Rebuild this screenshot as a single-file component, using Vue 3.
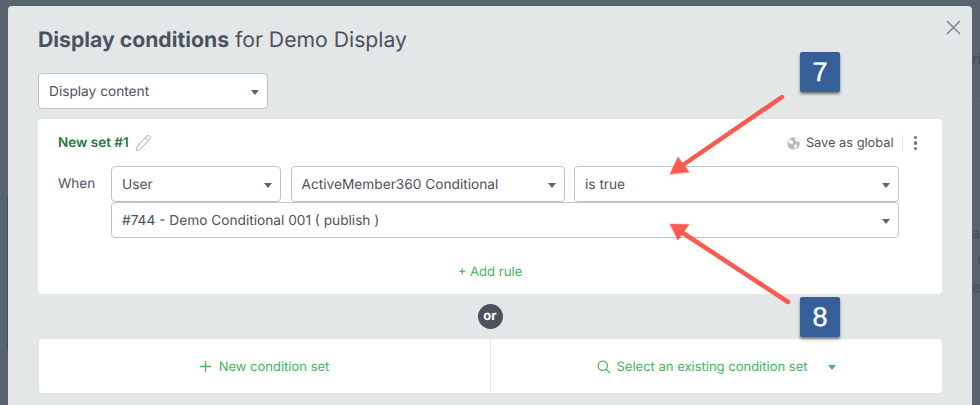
<script setup>
const firstRow = [
  { label: 'User', cls: 'w-user' },
  { label: 'ActiveMember360 Conditional', cls: 'w-field' },
  { label: 'is true', cls: 'w-op' },
]
</script>

<template>
  <div class="page">
    <div class="backdrop" aria-hidden="true">
      <span class="bg-line l1"></span>
      <span class="bg-line l2"></span>
      <span class="bg-line l3"></span>
      <span class="edge"></span>
      <span class="bg-text t1">ri</span>
      <span class="bg-text t2">ac</span>
      <span class="bg-text t3">s</span>
      <span class="bg-text t4">er</span>
    </div>

    <section class="modal">
      <svg class="close" width="15" height="15" viewBox="0 0 15 15">
        <path d="M1 1l13 13M14 1L1 14" stroke="#7d868c" stroke-width="1.5" fill="none" />
      </svg>

      <h1 class="title"><b>Display conditions</b> for Demo Display</h1>

      <div class="select top-select">
        <span>Display content</span><i class="caret"></i>
      </div>

      <div class="card">
        <div class="card-head">
          <div class="set-name">
            <strong>New set #1</strong>
            <svg width="17" height="18" viewBox="0 0 17 18" fill="none" stroke="#bac1c8" stroke-width="1.1">
              <path d="M2.600 11.800 11.600 2.300a2.100 2.100 0 0 1 3.100 2.900l-9.100 9.700c-1 1-3.600 1.900-4 1.500s.1-3.400 1-4.600Z" />
              <path d="M10.400 3.600l3.200 3" />
            </svg>
          </div>
          <div class="head-actions">
            <svg width="13" height="13" viewBox="0 0 13 13">
              <circle cx="6.500" cy="6.500" r="6.200" fill="#b3bbc3" />
              <path d="M2 2.500 5 3.500 6.500 5.500 5 7.300 3.300 6.500 1 5ZM7.500 1l3 .8 1.500 3-2 .4-1.500-1.600ZM7.200 7.500l3.300.6-1.700 3.600-1.300.7Z" fill="#fff" />
            </svg>
            <span class="save">Save as global</span>
            <span class="sep"></span>
            <span class="dots"><i></i><i></i><i></i></span>
          </div>
        </div>

        <div class="rule">
          <span class="when">When</span>
          <div class="rule-fields">
            <div class="row">
              <div v-for="f in firstRow" :key="f.label" class="select" :class="f.cls">
                <span>{{ f.label }}</span><i class="caret"></i>
              </div>
            </div>
            <div class="select w-full">
              <span>#744 - Demo Conditional 001 ( publish )</span><i class="caret"></i>
            </div>
          </div>
        </div>

        <div class="add-rule">+ Add rule</div>
      </div>

      <div class="or-wrap"><span class="or">or</span></div>

      <div class="actions">
        <div class="action">
          <svg width="11" height="11" viewBox="0 0 11 11">
            <path d="M5.500 0v11M0 5.500h11" stroke="#45b45c" stroke-width="1.300" fill="none" />
          </svg>
          <span>New condition set</span>
        </div>
        <div class="action right">
          <svg width="14" height="14" viewBox="0 0 15 15" fill="none" stroke="#45b45c" stroke-width="1.300">
            <circle cx="6.200" cy="6.200" r="5" />
            <path d="M9.800 9.800 14 14" />
          </svg>
          <span>Select an existing condition set</span>
          <i class="caret green"></i>
        </div>
      </div>
    </section>

    <svg class="arrows" width="980" height="405" viewBox="0 0 980 405">
      <g fill="#fb5a50" stroke="#fb5a50" stroke-linecap="round">
        <path d="M782 97 680 167" stroke-width="4.500" fill="none" />
        <path d="M670 174 678 157 689 172Z" stroke-width="0.500" />
        <path d="M788 302 680 231" stroke-width="4.500" fill="none" />
        <path d="M670 224 689 224.500 678 240Z" stroke-width="0.500" />
      </g>
    </svg>
    <div class="badge b7">7</div>
    <div class="badge b8">8</div>
  </div>
</template>

<style scoped>
.page {
  position: relative;
  width: 980px;
  height: 405px;
  overflow: hidden;
  background: #59636e;
  font-family: Inter, "Noto Sans", sans-serif;
  text-rendering: geometricPrecision;
  color: #4d525c;
  padding: 6px 8px 0;
  box-sizing: border-box;
}
.backdrop { position: absolute; inset: 0; }
.bg-line { position: absolute; left: 972px; width: 8px; height: 1px; }
.l1 { top: 98px; background: #626b76; }
.l2 { top: 217px; background: #4b6468; }
.l3 { top: 355px; background: #4b6468; }
.edge { position: absolute; left: 7px; top: 195px; width: 1px; height: 155px; background: #3f5357; }
.bg-text {
  position: absolute;
  font-size: 14px;
  color: #3f4a57;
  line-height: 16px;
}
.t1 { left: 972px; top: 52px; }
.t2 { left: 972px; top: 226px; }
.t3 { left: 977px; top: 252px; }
.t4 { left: 972px; top: 280px; }

.modal {
  position: relative;
  width: 964px;
  height: 420px;
  background: #e3e7e8;
  border-radius: 4px 4px 0 0;
  padding: 20px 30px 0;
  box-sizing: border-box;
}
.close { position: absolute; right: 11px; top: 14px; }
.title {
  margin: 0;
  font-size: 21.200px;
  line-height: 28px;
  font-weight: 400;
  color: #4d535e;
}
.title b { font-weight: 700; }

.select {
  display: flex;
  align-items: center;
  justify-content: space-between;
  height: 36px;
  box-sizing: border-box;
  background: #fff;
  border: 1px solid #bcc3ca;
  border-radius: 4px;
  padding: 1px 8px 0 10px;
  font-size: 13.700px;
  color: #4d525c;
}
.top-select { width: 230px; margin-top: 19px; }
.caret {
  width: 0;
  height: 0;
  border-left: 4.500px solid transparent;
  border-right: 4.500px solid transparent;
  border-top: 5px solid #5b626c;
  margin-top: 2px;
}
.caret.green { border-top-color: #45b45c; margin-left: 15px; }

.card {
  background: #fff;
  border-radius: 4px;
  margin-top: 10px;
  height: 175px;
  padding: 14px 20px 0;
  box-sizing: border-box;
}
.card-head {
  display: flex;
  justify-content: space-between;
  align-items: center;
  height: 20px;
}
.set-name { display: flex; align-items: center; gap: 6px; }
.set-name strong {
  font-size: 13.500px;
  font-weight: 600;
  color: #23763c;
}
.head-actions { display: flex; align-items: center; padding-right: 5px; }
.save { margin-left: 6px; font-size: 12.800px; color: #4d525c; }
.sep { width: 1px; height: 16px; background: #e3e6e9; margin: 0 11px 0 8px; }
.dots { display: flex; flex-direction: column; gap: 2px; }
.dots i { width: 3.500px; height: 3.500px; border-radius: 50%; background: #6a7079; }

.rule { display: flex; margin-top: 13px; }
.when { width: 53px; font-size: 13.500px; line-height: 37px; }
.rule-fields { width: 788px; }
.row { display: flex; justify-content: space-between; }
.w-user { width: 170px; }
.w-field { width: 274px; }
.w-op { width: 325px; }
.w-full { width: 788px; }

.add-rule {
  margin-top: 25px;
  text-align: center;
  font-size: 13.100px;
  line-height: 18px;
  color: #45b45c;
}
.or-wrap { display: flex; justify-content: center; margin-top: 10px; height: 25px; }
.or {
  width: 25px;
  height: 25px;
  border-radius: 50%;
  background: #4d515b;
  color: #fff;
  font-size: 13px;
  font-weight: 700;
  line-height: 24px;
  text-align: center;
}
.actions {
  display: flex;
  margin: 10px 0 0 1px;
  height: 54px;
  background: #fff;
  border-radius: 4px;
}
.action {
  flex: 0 0 451px;
  display: flex;
  align-items: center;
  justify-content: center;
  gap: 8px;
  padding-top: 1px;
  box-sizing: border-box;
  font-size: 13px;
  color: #45b45c;
}
.action.right {
  flex: 1;
  gap: 6px;
  border-left: 1px solid #e3e6e9;
}

.arrows { position: absolute; left: 0; top: 0; pointer-events: none; }
.badge {
  position: absolute;
  left: 800px;
  width: 40px;
  height: 40px;
  background: #345f99;
  border-radius: 2px;
  box-shadow: 0 2px 3px rgba(0, 0, 0, 0.5);
  color: #fff;
  font-family: "Liberation Sans", Arial, sans-serif;
  font-size: 27px;
  -webkit-text-stroke: 0.4px #fff;
  line-height: 41px;
  text-align: center;
}
.b7 { top: 52px; }
.b8 { top: 297px; }
</style>

<style>
html, body { margin: 0; background: #59636e; }
</style>
